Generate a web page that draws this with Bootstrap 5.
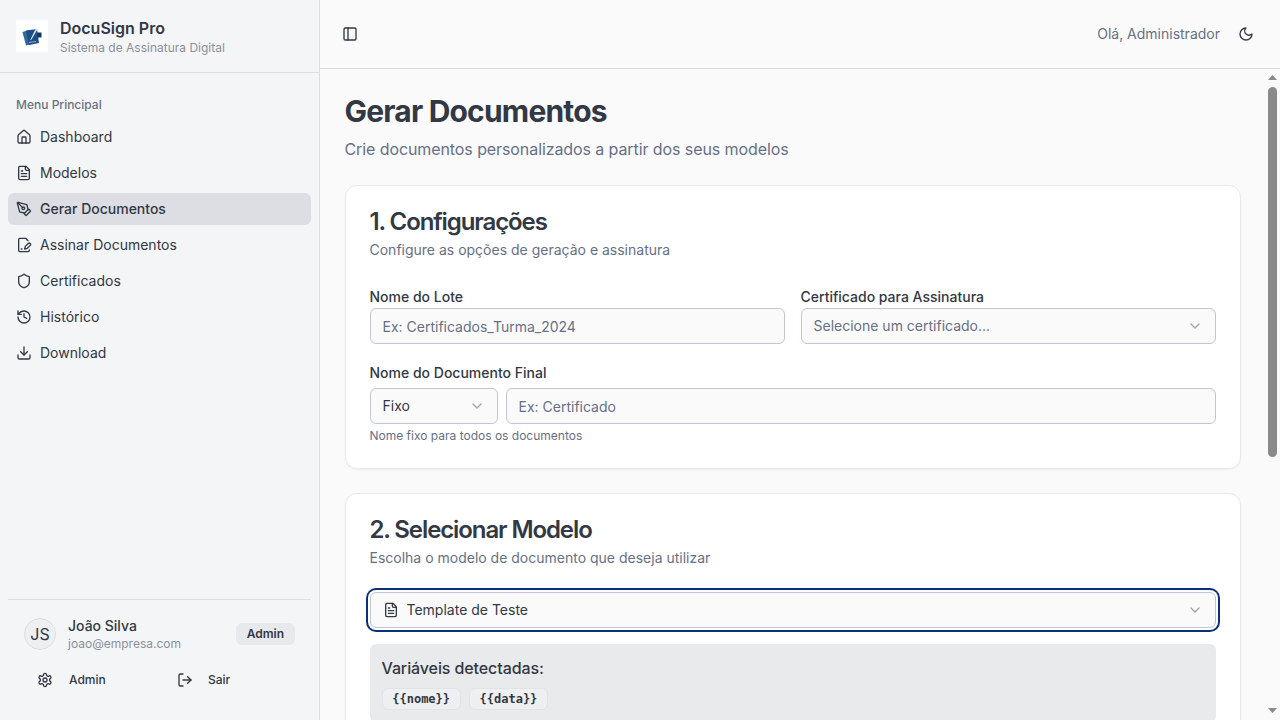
<!DOCTYPE html>
<html lang="pt-BR">
<head>
    <meta charset="UTF-8">
    <meta name="viewport" content="width=device-width, initial-scale=1.0">
    <title>DocuSign Pro</title>

    <link href="https://cdn.jsdelivr.net/npm/bootstrap@5.3.3/dist/css/bootstrap.min.css" rel="stylesheet">
    <style>
        body {
            height: 100vh;
            overflow: hidden;
            background: #fafafa;
            color: #323844;
            font-family: Inter, "Liberation Sans", sans-serif;
            font-size: 14px;
            line-height: 20px;
        }

        .ico {
            width: 16px;
            height: 16px;
            flex: none;
            fill: none;
            stroke: currentColor;
            stroke-width: 2;
            stroke-linecap: round;
            stroke-linejoin: round;
        }

        /* Sidebar */
        .sidebar {
            width: 320px;
            flex: none;
            background: #f4f5f7;
            border-right: 1px solid #dcdee5;
        }
        .brand {
            height: 73px;
            padding: 0 16px;
            gap: 12px;
            border-bottom: 1px solid #dcdee5;
        }
        .brand-logo {
            width: 32px;
            height: 32px;
            background: #fff;
        }
        .brand-name {
            font-size: 16px;
            font-weight: 600;
            line-height: 24px;
        }
        .brand-sub {
            font-size: 12px;
            line-height: 16px;
            color: #8b909b;
        }
        .menu-title {
            padding: 0 8px;
            margin: 0;
            font-size: 12px;
            font-weight: 500;
            line-height: 32px;
            height: 32px;
            color: #6b7280;
        }
        .menu-area {
            padding: 16px 8px 0;
        }
        .side-link {
            height: 32px;
            padding: 0 8px;
            gap: 8px;
            border-radius: 6px;
            color: #323844;
            font-size: 14px;
            text-decoration: none;
        }
        .side-link.active {
            background: #dddee4;
            color: #323844;
            font-weight: 500;
        }
        .menu-list {
            gap: 4px;
        }
        .user-area {
            margin: 0 8px;
            padding: 18px 16px 0;
            height: 121px;
            border-top: 1px solid #dcdee5;
        }
        .avatar {
            width: 32px;
            height: 32px;
            flex: none;
            background: #eeeff1;
            border: 1px solid #dcdee5;
            font-size: 16px;
        }
        .user-text {
            margin-bottom: -2px;
        }
        .user-name {
            font-weight: 500;
            line-height: 16px;
        }
        .user-mail {
            font-size: 12px;
            line-height: 16px;
            margin-top: 2px;
            color: #8b909b;
        }
        .role-tag {
            background: #e8e9ec;
            color: #323844;
            font-size: 12px;
            font-weight: 600;
            line-height: 16px;
            padding: 3px 11px;
            border-radius: 6px;
        }
        .user-actions {
            margin-top: 12px;
        }
        .side-btn {
            width: 140px;
            flex: none;
            height: 36px;
            padding: 0 0 0 13px;
            gap: 16px;
            font-size: 12px;
            font-weight: 500;
            color: #323844;
            border: 0;
        }
        .side-btn + .side-btn {
            gap: 15px;
        }

        /* Topo */
        .topbar {
            height: 69px;
            flex: none;
            padding: 0 26px 0 22px;
            background: #fafafa;
            border-bottom: 1px solid #d5d7e2;
        }
        .topbar-hello {
            color: #667085;
            font-size: 14px;
        }
        .topbar-right {
            gap: 18px;
        }
        .plain-btn {
            color: #323844;
            line-height: 0;
            padding: 0;
            border: 0;
        }

        /* Conteudo */
        .main-col {
            min-width: 0;
        }
        .main-row {
            min-height: 0;
        }
        .scroll-area {
            overflow: hidden;
            min-width: 0;
        }
        .page-wrap {
            padding: 24px 24.5px;
        }

        /* Barra de rolagem */
        .scroll-rail {
            width: 15px;
            flex: none;
            padding: 6px 0 7px;
        }
        .rail-up,
        .rail-down {
            width: 9px;
            height: 5px;
            background: #8a8a8a;
        }
        .rail-up {
            clip-path: polygon(50% 0, 100% 100%, 0 100%);
        }
        .rail-down {
            clip-path: polygon(0 0, 100% 0, 50% 100%);
        }
        .rail-thumb {
            width: 9px;
            height: 370px;
            margin-top: 7px;
            border-radius: 5px;
            background: #8a8a8a;
        }
        .page-title {
            font-size: 30px;
            font-weight: 700;
            line-height: 36px;
            letter-spacing: -0.8px;
            margin: 0;
        }
        .page-sub {
            font-size: 16px;
            line-height: 24px;
            letter-spacing: -0.09px;
            color: #667085;
            margin: 8px 0 24px;
        }
        .box {
            border: 1px solid #e8e9ee;
            border-radius: 12px;
            background: #fff;
            box-shadow: 0 1px 2px rgba(0, 0, 0, .05);
            padding: 24px;
            margin-bottom: 24px;
            color: #323844;
        }
        .box-title {
            font-size: 24px;
            font-weight: 600;
            line-height: 24px;
            letter-spacing: -1.1px;
            margin: 0 0 6px;
        }
        .box-sub {
            font-size: 14px;
            line-height: 20px;
            color: #667085;
            margin: 0 0 24px;
        }
        .field-label {
            display: block;
            font-size: 14px;
            font-weight: 500;
            line-height: 14px;
            margin-bottom: 4px;
        }
        .field-label.spaced {
            margin-bottom: 8px;
        }
        .field-row {
            display: grid;
            grid-template-columns: 1fr 1fr;
            gap: 16px;
            margin: 30px 0 22px;
        }
        .form-control.inp,
        .form-select.inp {
            height: 36px;
            padding: 0 12px;
            background-color: #fafafa;
            border: 1px solid #c2c5d6;
            border-radius: 6px;
            color: #323844;
            font-size: 14px;
            box-shadow: none;
        }
        .form-control.inp::placeholder {
            color: #667085;
        }
        .form-select.inp {
            padding-bottom: 2px;
            background-image: url("data:image/svg+xml,%3csvg xmlns='http://www.w3.org/2000/svg' viewBox='0 0 24 24' fill='none' stroke='%23a0a3ad' stroke-width='2' stroke-linecap='round' stroke-linejoin='round'%3e%3cpath d='m6 9 6 6 6-6'/%3e%3c/svg%3e");
            background-position: right 12px center;
            background-size: 16px 16px;
        }
        .form-select.inp.vazio {
            color: #667085;
        }
        .tipo-nome {
            width: 128px;
            flex: none;
        }
        .help-text {
            font-size: 12px;
            line-height: 16px;
            color: #667085;
            margin: 4px 0 0;
        }
        .model-select {
            height: 36px;
            margin: 0 0 16px;
            padding: 0 12px;
            gap: 8px;
            background: #fafafa;
            border: 1px solid #c2c5d6;
            border-radius: 6px;
            box-shadow: 0 0 0 2px #fff, 0 0 0 4px #0b2f78;
        }
        .chevron {
            color: #a0a3ad;
        }
        .vars-box {
            background: #e9eaec;
            border-radius: 6px;
            padding: 12px;
        }
        .vars-title {
            font-size: 16px;
            font-weight: 500;
            line-height: 24px;
            letter-spacing: -0.1px;
            margin-bottom: 8px;
        }
        .var-chip {
            background: #eeeff1;
            border: 1px solid #e2e3e7;
            border-radius: 6px;
            color: #323844;
            font-family: "DejaVu Sans Mono", "Liberation Mono", monospace;
            font-size: 12px;
            font-weight: 600;
            line-height: 20px;
            padding: 0 9.75px;
        }
    </style>
</head>
<body class="d-flex">

    <svg width="0" height="0" class="position-absolute">
        <symbol id="i-home" viewBox="0 0 24 24"><path d="M15 21v-8a1 1 0 0 0-1-1h-4a1 1 0 0 0-1 1v8"/><path d="M3 10a2 2 0 0 1 .709-1.528l7-5.999a2 2 0 0 1 2.582 0l7 5.999A2 2 0 0 1 21 10v9a2 2 0 0 1-2 2H5a2 2 0 0 1-2-2z"/></symbol>
        <symbol id="i-file" viewBox="0 0 24 24"><path d="M15 2H6a2 2 0 0 0-2 2v16a2 2 0 0 0 2 2h12a2 2 0 0 0 2-2V7Z"/><path d="M14 2v4a2 2 0 0 0 2 2h4"/><path d="M10 9H8"/><path d="M16 13H8"/><path d="M16 17H8"/></symbol>
        <symbol id="i-pen" viewBox="0 0 24 24"><path d="M15.707 21.293a1 1 0 0 1-1.414 0l-1.586-1.586a1 1 0 0 1 0-1.414l5.586-5.586a1 1 0 0 1 1.414 0l1.586 1.586a1 1 0 0 1 0 1.414z"/><path d="m18 13-1.375-6.874a1 1 0 0 0-.746-.776L3.235 2.028a1 1 0 0 0-1.207 1.207L5.35 15.879a1 1 0 0 0 .776.746L13 18"/><path d="m2.3 2.3 7.286 7.286"/><circle cx="11" cy="11" r="2"/></symbol>
        <symbol id="i-sign" viewBox="0 0 24 24"><path d="M20 19.5v.5a2 2 0 0 1-2 2H6a2 2 0 0 1-2-2V4a2 2 0 0 1 2-2h8.5L18 5.5"/><path d="M8 18h1"/><path d="M18.42 9.61a2.1 2.1 0 1 1 2.97 2.97L16.95 17 13 18l.99-3.95 4.43-4.44Z"/></symbol>
        <symbol id="i-shield" viewBox="0 0 24 24"><path d="M20 13c0 5-3.5 7.5-7.66 8.95a1 1 0 0 1-.67-.01C7.5 20.5 4 18 4 13V6a1 1 0 0 1 1-1c2 0 4.5-1.2 6.24-2.72a1.17 1.17 0 0 1 1.52 0C14.51 3.81 17 5 19 5a1 1 0 0 1 1 1z"/></symbol>
        <symbol id="i-history" viewBox="0 0 24 24"><path d="M3 12a9 9 0 1 0 9-9 9.75 9.75 0 0 0-6.74 2.74L3 8"/><path d="M3 3v5h5"/><path d="M12 7v5l4 2"/></symbol>
        <symbol id="i-download" viewBox="0 0 24 24"><path d="M21 15v4a2 2 0 0 1-2 2H5a2 2 0 0 1-2-2v-4"/><polyline points="7 10 12 15 17 10"/><line x1="12" x2="12" y1="15" y2="3"/></symbol>
        <symbol id="i-gear" viewBox="0 0 24 24"><path d="M12.22 2h-.44a2 2 0 0 0-2 2v.18a2 2 0 0 1-1 1.73l-.43.25a2 2 0 0 1-2 0l-.15-.08a2 2 0 0 0-2.73.73l-.22.38a2 2 0 0 0 .73 2.73l.15.1a2 2 0 0 1 1 1.72v.51a2 2 0 0 1-1 1.74l-.15.09a2 2 0 0 0-.73 2.73l.22.38a2 2 0 0 0 2.73.73l.15-.08a2 2 0 0 1 2 0l.43.25a2 2 0 0 1 1 1.73V20a2 2 0 0 0 2 2h.44a2 2 0 0 0 2-2v-.18a2 2 0 0 1 1-1.73l.43-.25a2 2 0 0 1 2 0l.15.08a2 2 0 0 0 2.73-.73l.22-.39a2 2 0 0 0-.73-2.73l-.15-.08a2 2 0 0 1-1-1.74v-.5a2 2 0 0 1 1-1.74l.15-.09a2 2 0 0 0 .73-2.73l-.22-.38a2 2 0 0 0-2.73-.73l-.15.08a2 2 0 0 1-2 0l-.43-.25a2 2 0 0 1-1-1.73V4a2 2 0 0 0-2-2z"/><circle cx="12" cy="12" r="3"/></symbol>
        <symbol id="i-logout" viewBox="0 0 24 24"><path d="M9 21H5a2 2 0 0 1-2-2V5a2 2 0 0 1 2-2h4"/><polyline points="16 17 21 12 16 7"/><line x1="21" x2="9" y1="12" y2="12"/></symbol>
        <symbol id="i-panel" viewBox="0 0 24 24"><rect width="18" height="18" x="3" y="3" rx="2"/><path d="M9 3v18"/></symbol>
        <symbol id="i-moon" viewBox="0 0 24 24"><path d="M12 3a6 6 0 0 0 9 9 9 9 0 1 1-9-9Z"/></symbol>
        <symbol id="i-down" viewBox="0 0 24 24"><path d="m6 9 6 6 6-6"/></symbol>
    </svg>

    <!-- Sidebar -->
    <aside class="sidebar d-flex flex-column">
        <div class="brand d-flex align-items-center">
            <div class="brand-logo d-flex align-items-center justify-content-center">
                <svg width="24" height="24" viewBox="0 0 24 24">
                    <path d="M2.500 8 9 6l3 14-6 1.500z" fill="#2c6aa0"/>
                    <path d="M6 6.500 17 5l2 14-10 2z" fill="#1d4f86"/>
                    <path d="M17 8.500h4.500v5h-4z" fill="#16365c"/>
                    <path d="M10 16.500 16.500 3l.8 2.500L11.500 15.500z" fill="#dfe8f1"/>
                    <path d="M9 18.500l7-1" stroke="#8fb0cf" fill="none"/>
                </svg>
            </div>
            <div>
                <div class="brand-name">DocuSign Pro</div>
                <div class="brand-sub">Sistema de Assinatura Digital</div>
            </div>
        </div>

        <div class="menu-area flex-grow-1">
            <p class="menu-title">Menu Principal</p>
            <nav class="nav flex-column menu-list">
                <a class="side-link d-flex align-items-center" href="#"><svg class="ico"><use href="#i-home"/></svg>Dashboard</a>
                <a class="side-link d-flex align-items-center" href="#"><svg class="ico"><use href="#i-file"/></svg>Modelos</a>
                <a class="side-link d-flex align-items-center active" href="#"><svg class="ico"><use href="#i-pen"/></svg>Gerar Documentos</a>
                <a class="side-link d-flex align-items-center" href="#"><svg class="ico"><use href="#i-sign"/></svg>Assinar Documentos</a>
                <a class="side-link d-flex align-items-center" href="#"><svg class="ico"><use href="#i-shield"/></svg>Certificados</a>
                <a class="side-link d-flex align-items-center" href="#"><svg class="ico"><use href="#i-history"/></svg>Histórico</a>
                <a class="side-link d-flex align-items-center" href="#"><svg class="ico"><use href="#i-download"/></svg>Download</a>
            </nav>
        </div>

        <div class="user-area">
            <div class="d-flex align-items-center gap-2">
                <div class="avatar rounded-circle d-flex align-items-center justify-content-center me-1">JS</div>
                <div class="user-text flex-grow-1">
                    <div class="user-name">João Silva</div>
                    <div class="user-mail">joao@empresa.com</div>
                </div>
                <span class="role-tag">Admin</span>
            </div>
            <div class="user-actions d-flex">
                <button class="btn side-btn d-flex align-items-center" type="button"><svg class="ico"><use href="#i-gear"/></svg>Admin</button>
                <button class="btn side-btn d-flex align-items-center" type="button"><svg class="ico"><use href="#i-logout"/></svg>Sair</button>
            </div>
        </div>
    </aside>

    <!-- Area principal -->
    <div class="main-col d-flex flex-column flex-grow-1">
        <header class="topbar d-flex align-items-center justify-content-between">
            <button class="btn plain-btn" type="button"><svg class="ico"><use href="#i-panel"/></svg></button>
            <div class="topbar-right d-flex align-items-center">
                <span class="topbar-hello">Olá, Administrador</span>
                <button class="btn plain-btn" type="button"><svg class="ico"><use href="#i-moon"/></svg></button>
            </div>
        </header>

        <div class="main-row d-flex flex-grow-1">
            <main class="scroll-area flex-grow-1">
                <div class="page-wrap">
                    <h1 class="page-title">Gerar Documentos</h1>
                    <p class="page-sub">Crie documentos personalizados a partir dos seus modelos</p>

                    <section class="card box">
                        <h2 class="box-title">1. Configurações</h2>
                        <p class="box-sub mb-0">Configure as opções de geração e assinatura</p>

                        <div class="field-row">
                            <div>
                                <label class="field-label">Nome do Lote</label>
                                <input class="form-control inp" type="text" placeholder="Ex: Certificados_Turma_2024">
                            </div>
                            <div>
                                <label class="field-label">Certificado para Assinatura</label>
                                <select class="form-select inp vazio">
                                    <option>Selecione um certificado...</option>
                                </select>
                            </div>
                        </div>

                        <label class="field-label spaced">Nome do Documento Final</label>
                        <div class="d-flex gap-2">
                            <select class="form-select inp tipo-nome">
                                <option>Fixo</option>
                            </select>
                            <input class="form-control inp" type="text" placeholder="Ex: Certificado">
                        </div>
                        <p class="help-text">Nome fixo para todos os documentos</p>
                    </section>

                    <section class="card box">
                        <h2 class="box-title">2. Selecionar Modelo</h2>
                        <p class="box-sub">Escolha o modelo de documento que deseja utilizar</p>

                        <div class="model-select d-flex align-items-center">
                            <svg class="ico"><use href="#i-file"/></svg>
                            <span class="flex-grow-1">Template de Teste</span>
                            <svg class="ico chevron"><use href="#i-down"/></svg>
                        </div>

                        <div class="vars-box">
                            <div class="vars-title">Variáveis detectadas:</div>
                            <div class="d-flex gap-2">
                                <span class="var-chip">{{nome}}</span>
                                <span class="var-chip">{{data}}</span>
                            </div>
                        </div>
                    </section>
                </div>
            </main>

            <!-- barra de rolagem da area de conteudo -->
            <div class="scroll-rail d-flex flex-column align-items-center">
                <div class="rail-up"></div>
                <div class="rail-thumb"></div>
                <div class="rail-down mt-auto"></div>
            </div>
        </div>
    </div>

    <script src="https://cdn.jsdelivr.net/npm/bootstrap@5.3.3/dist/js/bootstrap.bundle.min.js"></script>
</body>
</html>
